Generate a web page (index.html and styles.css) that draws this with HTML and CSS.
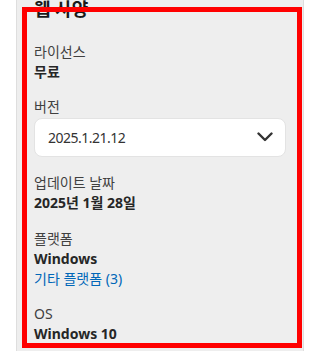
FILE: index.html
```html
<!DOCTYPE html>
<html lang="ko">
<head>
<meta charset="utf-8">
<link rel="stylesheet" href="styles.css">
</head>
<body>
<div class="page">
  <div class="panel">
    <div class="content">
      <h2 class="heading">웹 사양</h2>
      <div class="specs">
        <div class="group">
          <div class="label">라이선스</div>
          <div class="value">무료</div>
        </div>
        <div class="group">
          <div class="label">버전</div>
          <div class="select">
            <span class="select-text">2025.1.21.12</span>
            <svg class="chevron" width="16" height="10" viewBox="0 0 16 10"><path d="M1.5 1.5 L8 8 L14.5 1.5" fill="none" stroke="#333" stroke-width="2.4" stroke-linecap="round" stroke-linejoin="round"/></svg>
          </div>
        </div>
        <div class="group">
          <div class="label">업데이트 날짜</div>
          <div class="value">2025년 1월 28일</div>
        </div>
        <div class="group">
          <div class="label">플랫폼</div>
          <div class="value">Windows</div>
          <a class="link" href="#">기타 플랫폼 (3)</a>
        </div>
        <div class="group">
          <div class="label">OS</div>
          <div class="value">Windows 10</div>
        </div>
      </div>
    </div>
  </div>
  <div class="highlight"></div>
</div>
</body>
</html>
```
FILE: styles.css
```css
html, body {
  margin: 0;
  padding: 0;
  background: #ffffff;
}
body {
  font-family: "Noto Sans", "Noto Sans CJK KR", sans-serif;
  width: 316px;
  height: 351px;
  overflow: hidden;
}
.page {
  position: relative;
  width: 316px;
  height: 351px;
  overflow: hidden;
}
.panel {
  margin-left: 16px;
  width: 286px;
  height: 351px;
  background: #eeeeee;
  border-left: 1px solid #dedede;
  border-right: 1px solid #dedede;
  overflow: hidden;
}
.content {
  padding: 0 17px 0 17px;
  margin-top: -4px;
}
.heading {
  margin: 0;
  font-size: 18px;
  line-height: 26px;
  font-weight: 700;
  color: #1a1a1a;
}
.specs {
  margin-top: 19.5px;
  display: flex;
  flex-direction: column;
  gap: 15.5px;
}
.group {
  display: flex;
  flex-direction: column;
}
.label {
  font-size: 14px;
  line-height: 20px;
  color: #404040;
}
.value {
  font-size: 14px;
  line-height: 20px;
  font-weight: 700;
  color: #262626;
}
.link {
  font-size: 14px;
  line-height: 20px;
  color: #0067b8;
  text-decoration: none;
}
.select {
  margin-top: 0.5px;
  margin-bottom: 1px;
  height: 39px;
  box-sizing: border-box;
  background: #ffffff;
  border: 1px solid #e3e3e3;
  border-radius: 8px;
  display: flex;
  align-items: center;
  justify-content: space-between;
  padding: 0 12px 0 13px;
}
.select-text {
  font-size: 14px;
  color: #333333;
  letter-spacing: -0.5px;
}
.chevron {
  display: block;
}
.highlight {
  position: absolute;
  left: 22px;
  top: 7px;
  width: 280px;
  height: 341px;
  box-sizing: border-box;
  border: 5px solid #ff0000;
  pointer-events: none;
}
```
